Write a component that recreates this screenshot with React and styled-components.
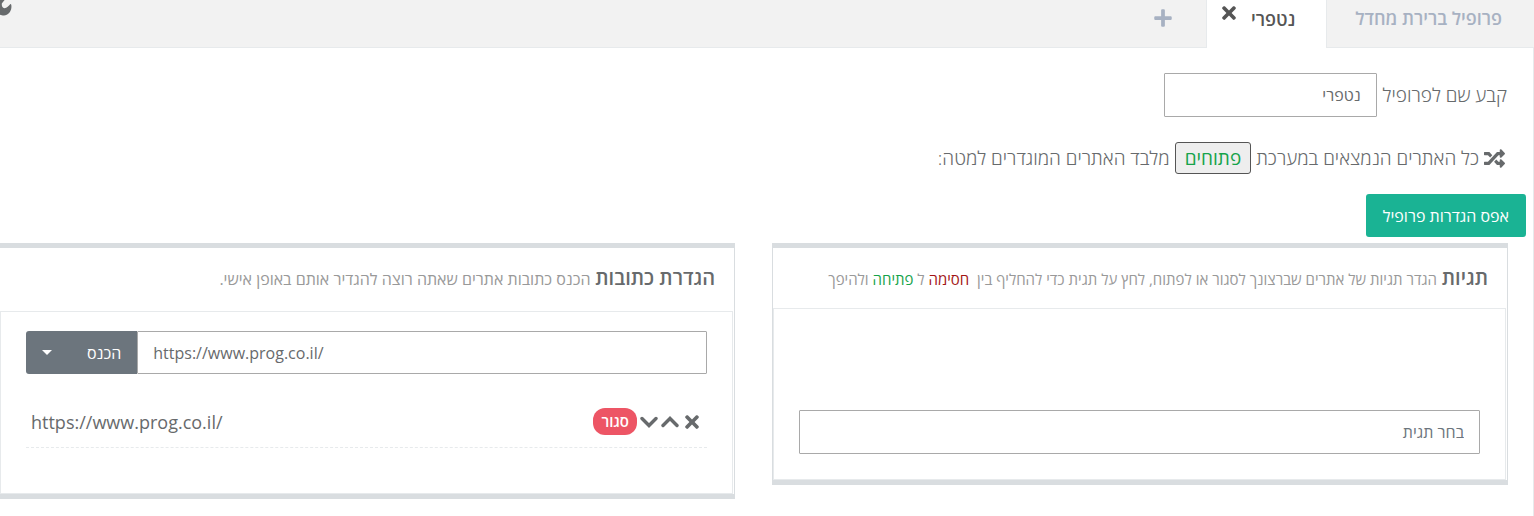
import React, { useState } from "react";
import styled, { createGlobalStyle, css } from "styled-components";
import { FaRandom, FaTimes, FaPlus } from "react-icons/fa";

export default function App() {
  const [name, setName] = useState("נטפרי");
  const [url, setUrl] = useState("https://www.prog.co.il/");
  const [tag, setTag] = useState("");

  return (
    <Page>
      <GlobalStyle />
      <TabBar>
        <Tab>פרופיל ברירת מחדל</Tab>
        <ActiveTab>
          <TabName>נטפרי</TabName>
          <CloseTab aria-label="מחק פרופיל">
            <FaTimes size={20} />
          </CloseTab>
        </ActiveTab>
        <AddTab aria-label="הוסף פרופיל">
          <FaPlus size={20} />
        </AddTab>
        <Settings aria-label="הגדרות">
          <Wrench />
        </Settings>
      </TabBar>

      <Content>
        <Line>
          <label htmlFor="profile-name">קבע שם לפרופיל</label>
          <NameInput
            id="profile-name"
            value={name}
            onChange={(e) => setName(e.target.value)}
          />
        </Line>
        <Rule>
          <FaRandom size={21} />
          <span>כל האתרים הנמצאים במערכת</span>
          <ModeButton>פתוחים</ModeButton>
          <span>מלבד האתרים המוגדרים למטה:</span>
        </Rule>
        <ResetButton>אפס הגדרות פרופיל</ResetButton>

        <Panels>
          <Panel>
            <PanelHeader>
              <Title>תגיות</Title>{" "}
              <Hint>
                הגדר תגיות של אתרים שברצונך לסגור או לפתוח, לחץ על תגית כדי
                להחליף בין &nbsp;<Word color="#a31515">חסימה</Word> ל{" "}
                <Word color="#16a34a">פתיחה</Word> ולהיפך
              </Hint>
            </PanelHeader>
            <PanelBody $tags>
              <Input
                aria-label="בחר תגית"
                placeholder="בחר תגית"
                value={tag}
                onChange={(e) => setTag(e.target.value)}
              />
            </PanelBody>
          </Panel>

          <Panel>
            <PanelHeader $tall>
              <Title>הגדרת כתובות</Title>{" "}
              <Hint $large>
                הכנס כתובות אתרים שאתה רוצה להגדיר אותם באופן אישי.
              </Hint>
            </PanelHeader>
            <PanelBody>
              <InputGroup>
                <UrlInput
                  dir="ltr"
                  aria-label="כתובת"
                  value={url}
                  onChange={(e) => setUrl(e.target.value)}
                />
                <InsertButton>הכנס</InsertButton>
                <CaretButton aria-label="אפשרויות">
                  <Caret />
                </CaretButton>
              </InputGroup>
              <UrlList>
                {urls.map((i) => (
                  <UrlRow key={i.id} {...i} />
                ))}
              </UrlList>
            </PanelBody>
          </Panel>
        </Panels>
      </Content>
    </Page>
  );
}

function UrlRow(props) {
  return (
    <Row>
      <Actions>
        <IconButton aria-label="מחק">
          <FaTimes size={20} />
        </IconButton>
        <IconButton aria-label="למעלה">
          <Chevron d="M2 9.500 9 2.500l7 7" />
        </IconButton>
        <IconButton aria-label="למטה">
          <Chevron d="M2 2.500l7 7 7-7" />
        </IconButton>
        <Badge>{props.status}</Badge>
      </Actions>
      <Url dir="ltr">{props.url}</Url>
    </Row>
  );
}

const Chevron = ({ d }) => (
  <svg width="18" height="12" viewBox="0 0 18 12" fill="none">
    <path d={d} stroke="currentColor" strokeWidth="3.4" strokeLinecap="round" />
  </svg>
);

const Wrench = () => (
  <svg width="12" height="16" viewBox="0 0 12 16" fill="currentColor">
    <path d="M0 0h4.600L1.800 3.600C1.500 6 2.500 8 4.500 8.200 7 8.200 8.500 6 10.400 4c1 .2 1.200 1.500 1 3.500C11 12 8 15.300 4 15.500c-1.500 0-3-.3-4-.8z" />
  </svg>
);

const text = "#676a6c";
const border = "#e7eaec";

const GlobalStyle = createGlobalStyle`
  * {
    box-sizing: border-box;
  }
  body {
    margin: 0;
    background: #fff;
  }
  body, button, input {
    font-family: "Open Sans", "Liberation Sans", sans-serif;
  }
`;

const Page = styled.div`
  direction: rtl;
  color: ${text};
  font-size: 18px;
  line-height: 24px;
  overflow: hidden;
`;

const TabBar = styled.nav`
  display: flex;
  height: 48px;
  background: #f2f2f2;
  border-bottom: 1px solid ${border};
`;
const tabStyle = css`
  border: 0;
  background: none;
  font-size: 18px;
  font-weight: 600;
  color: #a7b1c2;
  cursor: pointer;
`;
const Tab = styled.button`
  ${tabStyle}
  padding: 0 32px 12px 28px;
`;
const ActiveTab = styled.div`
  display: flex;
  align-items: flex-start;
  gap: 12px;
  height: 48px;
  padding: 0 31px 0 12px;
  background: #fff;
  border: 1px solid ${border};
  border-width: 0 1px;
  color: #555;
`;
const TabName = styled.span`
  padding-top: 7px;
  font-weight: 600;
`;
const IconButton = styled.button`
  display: flex;
  padding: 0;
  border: 0;
  background: none;
  color: inherit;
  cursor: pointer;
`;
const CloseTab = styled(IconButton)`
  padding-top: 3px;
`;
const AddTab = styled.button`
  ${tabStyle}
  display: flex;
  padding: 8px 33px;
`;
const Settings = styled(IconButton)`
  margin-right: auto;
  align-self: flex-start;
`;

const Content = styled.main`
  padding: 25px 0 17px;
  border-right: 1px solid ${border};
`;
const Line = styled.div`
  display: flex;
  align-items: center;
  gap: 6px;
  padding: 0 26px;
  font-size: 19px;
  font-weight: 300;
`;
const Rule = styled(Line)`
  gap: 5px;
  padding: 0 28px;
  margin: 25px 0 20px;
`;
const Input = styled.input`
  width: 100%;
  height: 44px;
  padding: 0 15px;
  border: 1px solid #a9a9a9;
  border-radius: 1px;
  background: #fff;
  color: ${text};
  font-size: 16px;
  &::placeholder {
    color: #6c757d;
    opacity: 1;
  }
`;
const NameInput = styled(Input)`
  width: 213px;
`;
const ModeButton = styled.button`
  height: 32px;
  padding: 0 9px;
  border: 1px solid #555;
  border-radius: 3px;
  background: #eee;
  color: #16a34a;
  font-size: 19px;
`;
const ResetButton = styled.button`
  display: block;
  height: 43px;
  margin-right: 7px;
  padding: 0 17px;
  border: 0;
  border-radius: 3px;
  background: #1ab394;
  color: #fff;
  font-size: 16px;
`;

const Panels = styled.div`
  display: grid;
  grid-template-columns: 1fr 1fr;
  align-items: start;
  gap: 37px;
  margin: 6px 25px 0 -1px;
`;
const Panel = styled.section`
  border: 1px solid #d9dde0;
  border-width: 5px 1px;
`;
const PanelHeader = styled.header`
  padding: 18px 19px 17px;
  ${(props) => props.$tall && "padding-bottom: 20px;"}
  white-space: nowrap;
`;
const Title = styled.h5`
  display: inline;
  margin: 0;
  font-size: 20px;
  font-weight: 600;
`;
const Hint = styled.small`
  font-size: ${(props) => (props.$large ? "16px" : "15px")};
  color: #999;
`;
const Word = styled.span`
  color: ${(props) => props.color};
`;
const PanelBody = styled.div`
  margin-right: 1px;
  padding: ${(props) => (props.$tags ? "101px 25px 25px" : "19px 25px 45px")};
  border: 1px solid ${border};
`;

const InputGroup = styled.div`
  display: flex;
  height: 43px;
`;
const UrlInput = styled(Input)`
  flex: 1;
  height: auto;
`;
const InsertButton = styled.button`
  padding: 0 16px 0 19px;
  border: 0;
  background: #6c757d;
  color: #fff;
  font-size: 16px;
`;
const CaretButton = styled(InsertButton)`
  padding: 0 16px;
  border-radius: 3px 0 0 3px;
`;
const Caret = styled.span`
  display: block;
  border: 5px solid transparent;
  border-top-color: #fff;
  border-bottom: 0;
`;
const UrlList = styled.ul`
  margin: 24px 0 0;
  padding: 0;
  list-style: none;
`;
const Row = styled.li`
  display: flex;
  align-items: center;
  justify-content: space-between;
  height: 50px;
  padding: 0 5px 2px;
  border-bottom: 1px dashed ${border};
`;
const Actions = styled.div`
  display: flex;
  align-items: center;
  gap: 3px;
`;
const Badge = styled.span`
  padding: 1px 8px 2px;
  border-radius: 12px;
  background: #ed5565;
  color: #fff;
  font-size: 15px;
  font-weight: 600;
`;
const Url = styled.span`
  font-size: 18px;
`;

const urls = [{ id: 1, url: "https://www.prog.co.il/", status: "סגור" }];
